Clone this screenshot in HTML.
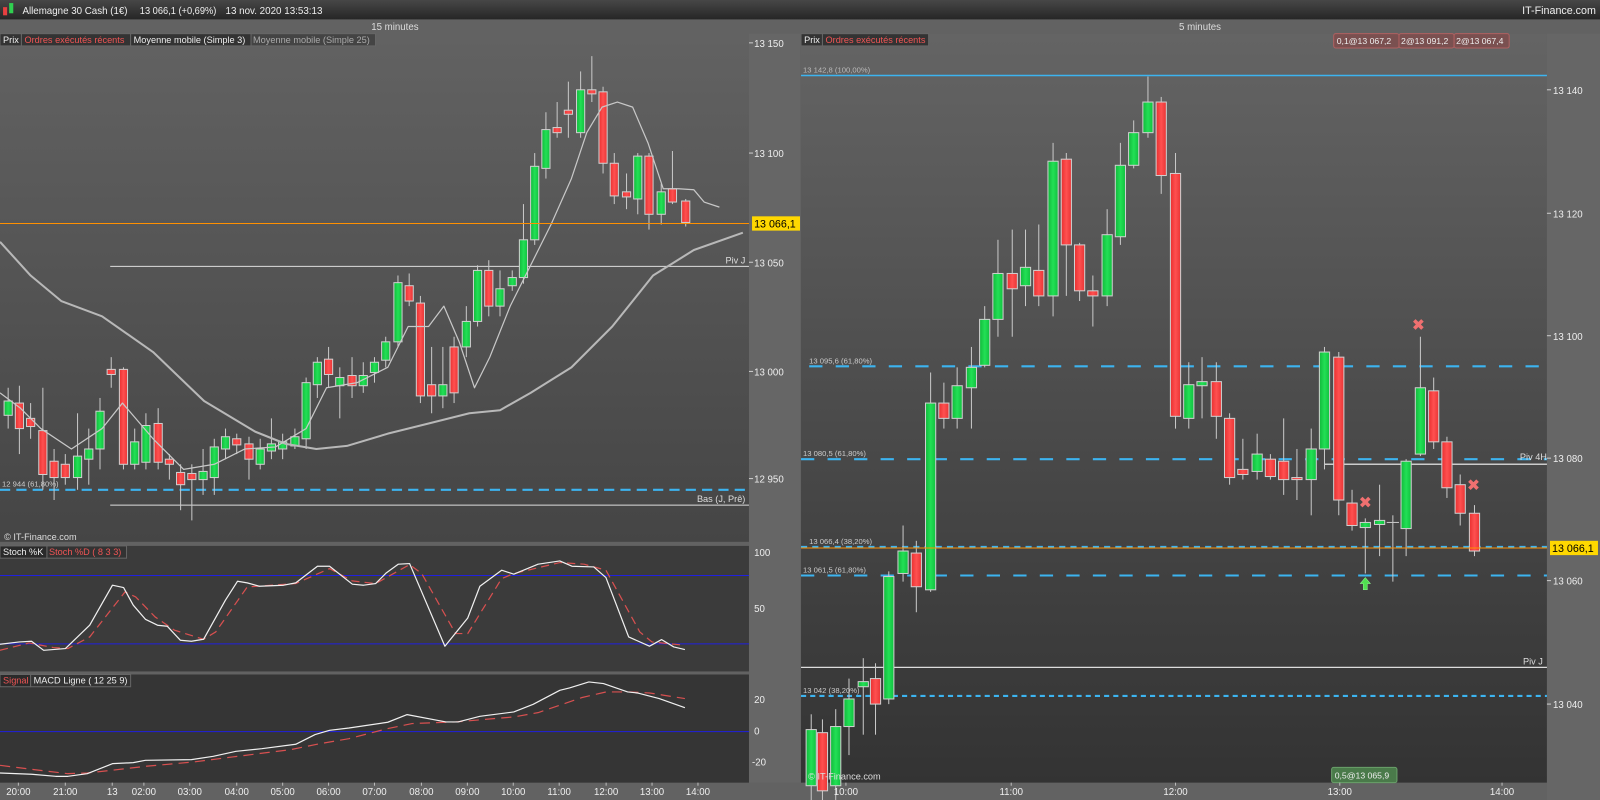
<!DOCTYPE html>
<html><head><meta charset="utf-8"><style>
html,body{margin:0;padding:0;background:#606060;overflow:hidden}
svg{display:block}
text{font-family:"Liberation Sans",sans-serif}
</style></head><body>
<svg id="s" width="1600" height="800" viewBox="0 0 1568 784" xmlns="http://www.w3.org/2000/svg">
<defs>
<linearGradient id="tb" x1="0" y1="0" x2="0" y2="1"><stop offset="0" stop-color="#474747"/><stop offset="1" stop-color="#262626"/></linearGradient>
<linearGradient id="lc" x1="0" y1="0" x2="0" y2="1"><stop offset="0" stop-color="#626262"/><stop offset="1" stop-color="#454545"/></linearGradient>
<linearGradient id="rc" x1="0" y1="0" x2="0" y2="1"><stop offset="0" stop-color="#646464"/><stop offset="1" stop-color="#333333"/></linearGradient>
<linearGradient id="gr" x1="0" y1="0" x2="1" y2="0"><stop offset="0" stop-color="#12b83c"/><stop offset="0.5" stop-color="#22e055"/><stop offset="1" stop-color="#12c040"/></linearGradient>
<linearGradient id="rd" x1="0" y1="0" x2="1" y2="0"><stop offset="0" stop-color="#e83030"/><stop offset="0.5" stop-color="#ff5050"/><stop offset="1" stop-color="#e83535"/></linearGradient>
</defs>
<rect width="1568" height="784" fill="#626262"/>
<rect width="1568" height="19" fill="url(#tb)"/>
<rect x="3" y="7" width="4" height="8" fill="#e84040"/><rect x="9" y="3" width="4" height="10" fill="#30d050"/>
<text x="22" y="13.5" fill="#eee" font-size="10" textLength="103" lengthAdjust="spacingAndGlyphs">Allemagne 30 Cash (1€)</text>
<text x="137" y="13.5" fill="#eee" font-size="10" textLength="75" lengthAdjust="spacingAndGlyphs">13 066,1 (+0,69%)</text>
<text x="221" y="13.5" fill="#eee" font-size="10" textLength="95" lengthAdjust="spacingAndGlyphs">13 nov. 2020 13:53:13</text>
<text x="1564" y="13.5" fill="#eee" font-size="10.5" text-anchor="end">IT-Finance.com</text>
<text x="387" y="29.5" fill="#ddd" font-size="9.5" text-anchor="middle">15 minutes</text>
<text x="1176" y="29.5" fill="#ddd" font-size="9.5" text-anchor="middle">5 minutes</text>
<rect x="0" y="33" width="734" height="498" fill="url(#lc)"/>
<rect x="0" y="535" width="734" height="123" fill="#3b3b3b"/>
<rect x="0" y="661" width="734" height="106" fill="#353535"/>
<rect x="734" y="33" width="50" height="734" fill="#666"/>
<rect x="785" y="33" width="731" height="734" fill="url(#rc)"/>
<rect x="1516" y="33" width="52" height="751" fill="#666"/>
</svg>
<script>
var NS="http://www.w3.org/2000/svg",svg=document.getElementById('s');
function el(t,a,txt){var e=document.createElementNS(NS,t);for(var k in a)e.setAttribute(k,a[k]);if(txt!=null)e.textContent=txt;svg.appendChild(e);return e;}
function line(x1,y1,x2,y2,c,w,d){var a={x1:x1,y1:y1,x2:x2,y2:y2,stroke:c,'stroke-width':w||1};if(d)a['stroke-dasharray']=d;el('line',a);}
function txt(x,y,s,c,fs,anc){el('text',{x:x,y:y,fill:c,'font-size':fs||9.5,'text-anchor':anc||'start'},s);}
function poly(pts,c,w,d,sx,sy,ox,oy){var p=pts.map(function(q){return (ox+q[0]*sx).toFixed(1)+','+(oy+q[1]*sy).toFixed(1)}).join(' ');var a={points:p,fill:'none',stroke:c,'stroke-width':w,'stroke-linejoin':'round'};if(d)a['stroke-dasharray']=d;el('polyline',a);}
function candles(arr,bw){arr.forEach(function(c){var x=c[0],t=Math.min(c[2],c[3]),b=Math.max(c[2],c[3]);line(x,c[4],x,c[5],'#c8c8c8',1);el('rect',{x:x-bw/2,y:t,width:bw,height:Math.max(b-t,2),fill:c[1]=='g'?'url(#gr)':'url(#rd)',stroke:'#d0d0d0','stroke-width':1});});}
line(0,480,734,480,'#3cb4f0',2,'10 6');
txt(2,477,'12 944 (61,80%)','#ccc',7.5);
line(108,261,734,261,'#ddd',1);txt(711,258,'Piv J','#ddd',9);
line(108,495,734,495,'#ddd',1);txt(683,492,'Bas (J, Prê)','#ddd',9);
var Lc=[[8,'g',393,407,380,420],[19,'r',395,420,378,445],[30,'r',410,418,395,430],[42,'r',422,465,380,480],[53,'r',452,468,440,490],[64,'r',455,468,445,475],[76,'g',447,468,405,480],[87,'g',440,450,420,475],[98,'g',403,440,390,460],[109,'r',362,367,350,380],[121,'r',362,455,360,460],[132,'g',433,455,420,460],[143,'g',417,453,405,460],[155,'r',415,453,400,460],[166,'r',450,455,445,470],[177,'r',463,475,455,500],[188,'r',464,470,455,510],[199,'g',462,470,440,485],[210,'g',438,468,430,485],[221,'g',428,440,420,450],[232,'r',430,436,425,445],[244,'r',435,450,428,470],[255,'g',440,455,430,460],[266,'g',435,442,410,450],[277,'g',433,440,425,450],[289,'g',428,437,420,440],[300,'g',375,430,370,440],[311,'g',355,377,350,390],[322,'r',352,367,340,380],[333,'g',370,378,360,410],[345,'r',368,378,350,390],[356,'g',368,378,355,385],[367,'g',355,365,350,375],[378,'g',335,353,330,360],[390,'g',277,335,270,340],[401,'r',280,295,268,300],[412,'r',297,388,290,395],[423,'r',377,388,340,405],[434,'g',377,388,340,400],[445,'r',340,385,330,395],[457,'g',315,340,300,350],[468,'g',265,315,260,320],[479,'r',265,300,255,310],[490,'g',283,300,265,310],[502,'g',272,280,265,285],[513,'g',235,272,200,278],[524,'g',163,235,150,240],[535,'g',127,165,110,175],[546,'r',125,130,100,135],[557,'r',108,112,80,135],[569,'g',88,130,70,135],[580,'r',88,92,55,100],[591,'r',90,160,85,170],[602,'r',160,192,150,200],[614,'r',188,193,170,205],[625,'g',153,195,150,210],[636,'r',153,210,150,225],[648,'g',188,210,180,220],[659,'r',185,198,148,200],[672,'r',197,218,195,222]];
candles(Lc,8);
poly([[0,237],[30,270],[60,295],[100,310],[150,345],[200,393],[250,423],[280,435],[310,440],[340,437],[380,425],[420,415],[460,405],[490,402],[520,385],[560,360],[600,320],[640,270],[680,245],[728,228]],'#b8b8b8',2,null,1,1,0,0);
poly([[0,385],[20,400],[40,420],[70,440],[100,420],[120,395],[150,430],[180,460],[210,455],[240,440],[270,438],[300,420],[320,380],[350,375],[380,360],[400,320],[420,320],[435,300],[450,335],[465,380],[480,350],[500,300],[520,260],[540,220],[560,175],[575,130],[590,105],[605,100],[620,105],[635,140],[650,185],[665,185],[680,186],[690,198],[705,203]],'#c8c8c8',1.2,null,1,1,0,0);
line(0,219,734,219,'#ff9000',1);
txt(4,529,'© IT-Finance.com','#ddd',9);
el('rect',{x:0,y:33,width:21,height:12,fill:'#333',stroke:'#666'});txt(3,42,'Prix','#eee',9);
el('rect',{x:21,y:33,width:107,height:12,fill:'#333',stroke:'#666'});txt(24,42,'Ordres exécutés récents','#f05555',9);
el('rect',{x:128,y:33,width:118,height:12,fill:'#333',stroke:'#666'});txt(131,42,'Moyenne mobile (Simple 3)','#eee',9);
el('rect',{x:246,y:33,width:122,height:12,fill:'#444',stroke:'#666'});txt(248,42,'Moyenne mobile (Simple 25)','#aaa',9);
[['13 150',39],['13 100',147],['13 050',254],['13 000',361],['12 950',466]].forEach(function(a){line(734,a[1]+3,738,a[1]+3,'#ccc',1);txt(739,a[1]+7,a[0],'#eee',9.5);});
el('rect',{x:737,y:212,width:47,height:14,fill:'#ffd800'});txt(739,223,'13 066,1','#000',10.5);
line(0,564,734,564,'#2020e0',1);line(0,631,734,631,'#2020e0',1);
var K=[[0,372],[40,365],[65,363],[90,390],[135,385],[185,315],[232,195],[255,202],[275,255],[300,297],[325,315],[345,318],[372,360],[395,363],[420,357],[465,240],[490,183],[510,188],[535,198],[585,195],[610,188],[655,138],[680,138],[727,192],[750,195],[775,190],[797,158],[822,132],[845,130],[918,378],[965,293],[990,198],[1035,150],[1060,162],[1110,132],[1155,122],[1180,138],[1225,140],[1250,172],[1297,350],[1340,378],[1365,358],[1390,380],[1413,388]];
var D=[[0,390],[60,368],[110,382],[140,385],[185,350],[258,215],[280,230],[320,290],[360,330],[420,357],[445,335],[510,200],[560,195],[610,190],[680,145],[727,182],[775,190],[845,133],[870,160],[940,340],[965,340],[1035,175],[1060,160],[1155,127],[1205,132],[1250,150],[1320,335],[1345,365],[1413,375]];
poly(D,'#d85050',1.2,'8 5',0.475,0.3268,0,509.8);
poly(K,'#f0f0f0',1.2,null,0.475,0.3268,0,509.8);
el('rect',{x:0,y:535,width:46,height:12,fill:'#2a2a2a',stroke:'#666'});txt(3,544,'Stoch %K','#eee',9);
el('rect',{x:46,y:535,width:78,height:12,fill:'#333',stroke:'#666'});txt(48,544,'Stoch %D ( 8 3 3)','#f05555',9);
txt(739,545,'100','#eee',9.5);txt(739,600,'50','#eee',9.5);
line(0,717,734,717,'#2020e0',1);
var M=[[0,758],[65,762],[115,768],[140,768],[180,760],[232,730],[275,727],[300,720],[395,718],[440,708],[487,693],[540,685],[610,672],[650,643],[680,630],[720,623],[800,606],[840,583],[920,605],[945,605],[990,588],[1060,575],[1100,552],[1155,510],[1175,503],[1215,485],[1245,490],[1295,515],[1315,518],[1360,535],[1413,562]];
var S=[[0,735],[70,748],[140,760],[180,758],[230,750],[300,738],[400,725],[480,710],[600,688],[660,670],[720,655],[800,625],[850,610],[940,605],[1060,590],[1110,577],[1200,532],[1250,515],[1300,515],[1340,518],[1413,535]];
poly(S,'#d85050',1.2,'10 6',0.475,0.3268,0,509.8);
poly(M,'#f0f0f0',1.2,null,0.475,0.3268,0,509.8);
el('rect',{x:0,y:661,width:30,height:12,fill:'#2a2a2a',stroke:'#666'});txt(3,670,'Signal','#f05555',9);
el('rect',{x:30,y:661,width:98,height:12,fill:'#333',stroke:'#666'});txt(33,670,'MACD Ligne ( 12 25 9)','#eee',9);
txt(739,689,'20','#eee',9.5);txt(739,720,'0','#eee',9.5);txt(737,750,'-20','#eee',9.5);
[['20:00',18],['21:00',64],['13',110],['02:00',141],['03:00',186],['04:00',232],['05:00',277],['06:00',322],['07:00',367],['08:00',413],['09:00',458],['10:00',503],['11:00',548],['12:00',594],['13:00',639],['14:00',684]].forEach(function(a){line(a[1],767,a[1],770,'#bbb',1);txt(a[1],779,a[0],'#eee',9.5,'middle');});
line(785,74,1516,74,'#3cb4f0',1.5);txt(787,71,'13 142,8 (100,00%)','#bbb',7.5);
line(793,359,1516,359,'#3cb4f0',2,'13 13');txt(793,356,'13 095,6 (61,80%)','#ccc',7.5);
line(785,450,1516,450,'#3cb4f0',2,'13 13');txt(787,447,'13 080,5 (61,80%)','#ccc',7.5);
line(785,536,1516,536,'#3cb4f0',2,'6 5');txt(793,533,'13 066,4 (38,20%)','#ccc',7.5);
line(785,564,1516,564,'#3cb4f0',2,'13 13');txt(787,561,'13 061,5 (61,80%)','#ccc',7.5);
line(785,682,1516,682,'#3cb4f0',2,'5 4');txt(787,679,'13 042 (38,20%)','#ccc',7.5);
line(785,654,1516,654,'#ddd',1.2);txt(1512,651,'Piv J','#ddd',9,'end');
line(1298,455,1516,455,'#ccc',1.5);txt(1516,451,'Piv 4H','#ddd',9,'end');
var Rc=[[795,'g',715,770,700,784],[806,'r',718,775,705,784],[819,'g',712,770,695,784],[832,'g',685,712,665,740],[846,'g',668,673,645,720],[858,'r',665,690,650,720],[871,'g',565,685,560,690],[885,'g',540,562,515,570],[898,'r',542,575,530,600],[912,'g',395,578,365,580],[925,'r',395,410,375,420],[938,'g',378,410,360,420],[952,'g',360,380,340,420],[965,'g',313,358,300,360],[978,'g',268,313,235,330],[992,'r',268,283,225,330],[1005,'g',262,280,225,300],[1018,'r',265,290,220,300],[1032,'g',158,290,140,310],[1045,'r',156,240,150,290],[1058,'r',240,285,238,295],[1071,'r',285,290,270,320],[1085,'g',230,290,205,300],[1098,'g',162,232,140,240],[1111,'g',130,162,118,165],[1125,'g',100,130,75,135],[1138,'r',100,172,95,190],[1152,'r',170,408,150,420],[1165,'g',377,410,355,420],[1178,'g',374,378,350,410],[1192,'r',374,408,355,430],[1205,'r',410,468,405,475],[1218,'r',460,465,430,470],[1232,'g',445,462,425,470],[1245,'r',450,467,445,470],[1258,'r',452,470,410,485],[1271,'r',468,470,440,490],[1285,'g',440,470,420,505],[1298,'g',345,440,340,460],[1312,'r',350,490,345,505],[1325,'r',493,515,480,520],[1338,'g',512,517,508,562],[1352,'g',510,514,475,545],[1378,'g',452,518,450,545],[1392,'g',380,445,330,447],[1405,'r',383,433,370,440],[1418,'r',433,478,428,488],[1431,'r',475,503,465,515],[1445,'r',503,540,495,545]];
candles(Rc,10);
line(1365,505,1365,570,'#c8c8c8',1);line(1359,512,1371,512,'#c8c8c8',1);
line(785,537,1516,537,'#ff9000',1);
[[1390,318],[1338,492],[1444,475]].forEach(function(p){el('path',{d:'M'+(p[0]-4)+' '+(p[1]-4)+'L'+(p[0]+4)+' '+(p[1]+4)+'M'+(p[0]+4)+' '+(p[1]-4)+'L'+(p[0]-4)+' '+(p[1]+4),stroke:'#f07070','stroke-width':3.5});});
el('path',{d:'M1338 566 L1333 572 L1336 572 L1336 578 L1340 578 L1340 572 L1343 572Z',fill:'#50e050',stroke:'#90f090','stroke-width':0.5});
el('rect',{x:785,y:33,width:21,height:12,fill:'#333',stroke:'#666'});txt(788,42,'Prix','#eee',9);
el('rect',{x:806,y:33,width:104,height:12,fill:'#333',stroke:'#666'});txt(809,42,'Ordres exécutés récents','#f05555',9);
el('rect',{x:1307,y:33,width:64,height:14,fill:'#7a5050',stroke:'#b06060',rx:2});txt(1310,43,'0,1@13 067,2','#eee',8.5);
el('rect',{x:1371,y:33,width:54,height:14,fill:'#7a5050',stroke:'#b06060',rx:2});txt(1373,43,'2@13 091,2','#eee',8.5);
el('rect',{x:1425,y:33,width:54,height:14,fill:'#7a5050',stroke:'#b06060',rx:2});txt(1427,43,'2@13 067,4','#eee',8.5);
el('rect',{x:1305,y:752,width:64,height:15,fill:'#4a7a4a',stroke:'#6aa06a',rx:2});txt(1308,763,'0,5@13 065,9','#eee',8.5);
txt(792,764,'© IT-Finance.com','#ddd',9);
[['13 140',91],['13 120',212],['13 100',332],['13 080',452],['13 060',572],['13 040',693]].forEach(function(a){line(1516,a[1]-3,1520,a[1]-3,'#ccc',1);txt(1522,a[1]+1,a[0],'#eee',9.5);});
el('rect',{x:1519,y:530,width:47,height:14,fill:'#ffd800'});txt(1521,541,'13 066,1','#000',10.5);
[['10:00',829],['11:00',991],['12:00',1152],['13:00',1313],['14:00',1472]].forEach(function(a){line(a[1],767,a[1],770,'#bbb',1);txt(a[1],779,a[0],'#eee',9.5,'middle');});
</script>
</body></html>
